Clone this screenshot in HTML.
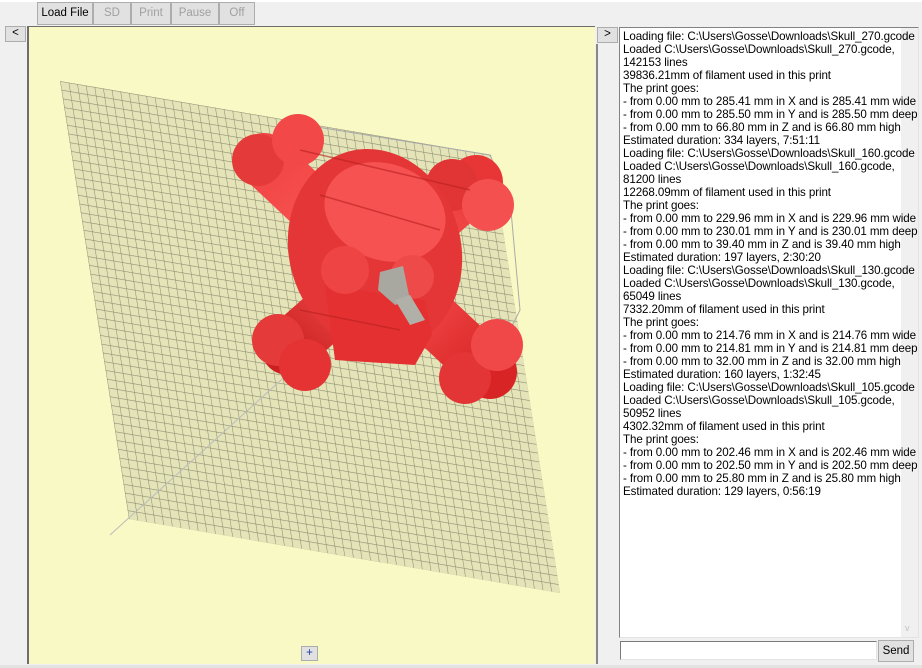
<!DOCTYPE html>
<html><head><meta charset="utf-8"><style>
*{box-sizing:border-box;margin:0;padding:0}
body{width:922px;height:668px;background:#f0f0f0;position:relative;overflow:hidden;font-family:"Liberation Sans",sans-serif;font-size:11px;color:#000}
.abs{position:absolute}
.btn{position:absolute;top:2px;height:23px;border:1px solid #adadad;background:#e1e1e1;text-align:center;line-height:21px;font-size:11.5px;color:#a0a0a0}
.sb{position:absolute;border:1px solid #adadad;background:#e1e1e1;text-align:center;font-size:11.5px}
#log{position:absolute;left:619px;top:27px;width:300px;height:611px;background:#fff;border:1px solid #828282;border-right-color:#e3e3e3;border-bottom-color:#e3e3e3}
#txt{position:absolute;left:3px;top:2px;line-height:13px;white-space:pre;font-size:11.6px;letter-spacing:-0.1px}
#scr{position:absolute;right:0;top:0;width:17px;height:100%;background:#f0f0f0}
</style></head><body>
<div class="abs" style="left:0;top:0;width:922px;height:2px;background:#fff"></div>
<div class="btn" style="left:37px;width:56px;color:#000">Load File</div>
<div class="btn" style="left:93px;width:38px">SD</div>
<div class="btn" style="left:131px;width:40px">Print</div>
<div class="btn" style="left:171px;width:48px">Pause</div>
<div class="btn" style="left:219px;width:36px">Off</div>
<div class="sb" style="left:5px;top:26px;width:21px;height:16px;line-height:13px">&lt;</div>
<div class="abs" style="left:27px;top:26px;width:568px;height:638px;border-left:2px solid #6d6d6d;border-top:1px solid #6d6d6d;background:#f9f9c6"></div>
<svg class="abs" style="left:0;top:0" width="600" height="668" viewBox="0 0 600 668">
<defs>
<pattern id="g" patternUnits="userSpaceOnUse" width="0.02" height="0.02">
<path d="M0 0H0.02M0 0V0.02" stroke="#8a8a70" stroke-width="0.0025" fill="none"/>
</pattern>
<linearGradient id="r1" x1="0" y1="0" x2="1" y2="1"><stop offset="0" stop-color="#f04545"/><stop offset=".5" stop-color="#ff5a5a"/><stop offset="1" stop-color="#d82424"/></linearGradient>
<linearGradient id="r2" x1="1" y1="0" x2="0" y2="1"><stop offset="0" stop-color="#e83535"/><stop offset=".5" stop-color="#ff6060"/><stop offset="1" stop-color="#cc2020"/></linearGradient>
</defs>
<g transform="matrix(431 74 69 438 60 81)">
<rect x="0" y="0" width="1" height="1" fill="#e4e4b8"/>
<rect x="0" y="0" width="1" height="1" fill="url(#g)"/>
</g>
<line x1="110" y1="535" x2="290" y2="372" stroke="#bbb" stroke-width="1"/>
<polyline points="305,125 490,155 510,200 520,310 500,350" fill="none" stroke="#aaa" stroke-width="1"/>
<line x1="264" y1="160" x2="490" y2="372" stroke="url(#r1)" stroke-width="54" stroke-linecap="round"/>
<line x1="476" y1="182" x2="288" y2="348" stroke="url(#r2)" stroke-width="54" stroke-linecap="round"/>
<circle cx="258" cy="160" r="26" fill="#e53a3a"/><circle cx="298" cy="140" r="26" fill="#f24848"/>
<circle cx="452" cy="185" r="26" fill="#e13535"/><circle cx="488" cy="205" r="26" fill="#f55050"/>
<circle cx="278" cy="340" r="26" fill="#e43a3a"/><circle cx="305" cy="365" r="26" fill="#e53333"/>
<circle cx="465" cy="378" r="26" fill="#e33535"/><circle cx="497" cy="345" r="26" fill="#f04848"/>
<ellipse cx="375" cy="250" rx="86" ry="102" transform="rotate(-15 375 250)" fill="#e43636"/>
<ellipse cx="385" cy="212" rx="62" ry="48" transform="rotate(20 385 212)" fill="#f75252"/>
<path d="M325 285 L425 300 L432 335 L415 365 L335 360 Z" fill="#e43030"/>
<circle cx="345" cy="270" r="24" fill="#ee4444"/><circle cx="412" cy="277" r="22" fill="#ef4a4a"/>
<path d="M380 272 L403 266 L410 300 L395 305 L378 290 Z" fill="#a8a8a0"/>
<path d="M395 300 L410 295 L425 320 L410 325 Z" fill="#b0b0a8"/>
<line x1="300" y1="150" x2="470" y2="190" stroke="#b82020" stroke-width="1.5" opacity=".6"/>
<line x1="320" y1="195" x2="440" y2="230" stroke="#b82020" stroke-width="1.5" opacity=".6"/>
<line x1="300" y1="310" x2="400" y2="330" stroke="#b82020" stroke-width="1.5" opacity=".6"/>
</svg>
<div class="sb" style="left:301px;top:646px;width:17px;height:15px;line-height:13px;color:#1a3fa8">+</div>
<div class="sb" style="left:597px;top:27px;width:21px;height:16px;line-height:13px">&gt;</div>
<div class="abs" style="left:596px;top:44px;width:2px;height:620px;background:#888"></div>
<div id="log"><div id="scr"><div style="position:absolute;top:6px;left:4px;color:#c0c0c0;font-size:9px">^</div><div style="position:absolute;bottom:4px;left:4px;color:#c0c0c0;font-size:9px">v</div></div><div id="txt">Loading file: C:\Users\Gosse\Downloads\Skull_270.gcode
Loaded C:\Users\Gosse\Downloads\Skull_270.gcode,
142153 lines
39836.21mm of filament used in this print
The print goes:
- from 0.00 mm to 285.41 mm in X and is 285.41 mm wide
- from 0.00 mm to 285.50 mm in Y and is 285.50 mm deep
- from 0.00 mm to 66.80 mm in Z and is 66.80 mm high
Estimated duration: 334 layers, 7:51:11
Loading file: C:\Users\Gosse\Downloads\Skull_160.gcode
Loaded C:\Users\Gosse\Downloads\Skull_160.gcode,
81200 lines
12268.09mm of filament used in this print
The print goes:
- from 0.00 mm to 229.96 mm in X and is 229.96 mm wide
- from 0.00 mm to 230.01 mm in Y and is 230.01 mm deep
- from 0.00 mm to 39.40 mm in Z and is 39.40 mm high
Estimated duration: 197 layers, 2:30:20
Loading file: C:\Users\Gosse\Downloads\Skull_130.gcode
Loaded C:\Users\Gosse\Downloads\Skull_130.gcode,
65049 lines
7332.20mm of filament used in this print
The print goes:
- from 0.00 mm to 214.76 mm in X and is 214.76 mm wide
- from 0.00 mm to 214.81 mm in Y and is 214.81 mm deep
- from 0.00 mm to 32.00 mm in Z and is 32.00 mm high
Estimated duration: 160 layers, 1:32:45
Loading file: C:\Users\Gosse\Downloads\Skull_105.gcode
Loaded C:\Users\Gosse\Downloads\Skull_105.gcode,
50952 lines
4302.32mm of filament used in this print
The print goes:
- from 0.00 mm to 202.46 mm in X and is 202.46 mm wide
- from 0.00 mm to 202.50 mm in Y and is 202.50 mm deep
- from 0.00 mm to 25.80 mm in Z and is 25.80 mm high
Estimated duration: 129 layers, 0:56:19</div></div>
<div class="abs" style="left:620px;top:641px;width:257px;height:19px;background:#fff;border:1px solid #7a7a7a;border-right-color:#e3e3e3;border-bottom-color:#e3e3e3"></div>
<div class="sb" style="left:878px;top:640px;width:36px;height:22px;line-height:20px">Send</div>
<div class="abs" style="left:0;top:665px;width:922px;height:3px;background:#e3e3e3"></div>
</body></html>
